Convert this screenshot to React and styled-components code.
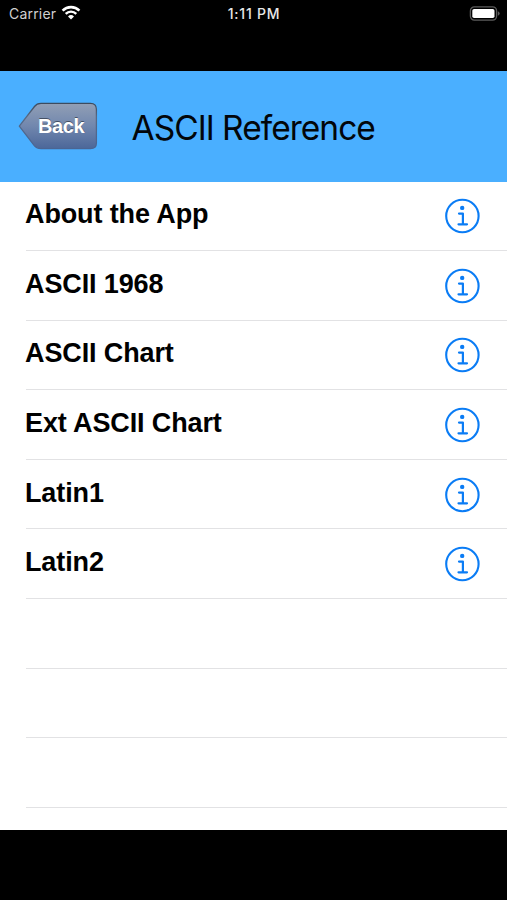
import styled, { createGlobalStyle } from "styled-components"

const opciones = ["About the App", "ASCII 1968", "ASCII Chart", "Ext ASCII Chart", "Latin1", "Latin2", "", "", ""]

const IconoWifi = () => (
  <svg width="20" height="15" viewBox="0 0 20 15" fill="none" stroke="#fff">
    <path d="M1.6 5.6 A11.9 11.9 0 0 1 18.4 5.6" strokeWidth="2.6" />
    <path d="M4.7 8.8 A7.5 7.5 0 0 1 15.3 8.8" strokeWidth="2.4" />
    <path d="M10 14.6 L7 11.5 A4.3 4.3 0 0 1 13 11.5 Z" fill="#fff" stroke="none" />
  </svg>
)

const IconoBateria = () => (
  <svg width="31" height="15" viewBox="0 0 31 15">
    <rect x="1.4" y="0.9" width="26.2" height="13.2" rx="4" fill="none" stroke="#5c5c5c" strokeWidth="1.3" />
    <rect x="3.3" y="3" width="22.2" height="9" rx="1.8" fill="#fff" />
    <path d="M28.9 5.2 Q30.7 6 30.7 7.5 Q30.7 9 28.9 9.8 Z" fill="#5c5c5c" />
  </svg>
)

const IconoInfo = () => (
  <svg width="36" height="36" viewBox="0 0 36 36" fill="none" stroke="#0a7cf5">
    <circle cx="18.4" cy="18" r="16.2" strokeWidth="2.1" />
    <circle cx="18.2" cy="9.9" r="2.2" fill="#0a7cf5" stroke="none" />
    <path d="M15 15.6 H18.9 V26.2 M14.5 26.3 H23" strokeWidth="2.2" strokeLinecap="round" strokeLinejoin="round" />
  </svg>
)

const FondoBoton = () => (
  <svg width="80" height="49" viewBox="0 0 80 49">
    <defs>
      <linearGradient id="metal" x1="0" y1="0" x2="0" y2="1">
        <stop offset="0" stopColor="#929fb5" />
        <stop offset="0.5" stopColor="#7187ae" />
        <stop offset="1" stopColor="#4c6799" />
      </linearGradient>
      <linearGradient id="borde" x1="0" y1="0" x2="0" y2="1">
        <stop offset="0" stopColor="#3d4b5e" />
        <stop offset="0.3" stopColor="#576984" />
        <stop offset="1" stopColor="#4a6593" />
      </linearGradient>
    </defs>
    <path
      d="M1.3 24.2 L16.5 4.5 Q18.8 1.4 23 1.4 H72.5 Q78.4 1.4 78.4 7.3 V41 Q78.4 46.6 72.5 46.6 H23 Q18.8 46.6 16.5 43.8 Z"
      fill="url(#metal)"
      stroke="url(#borde)"
      strokeWidth="1.3"
      strokeLinejoin="round"
    />
  </svg>
)

const App = () => {
  return (
    <>
      <EstiloGlobal />
      <Pantalla>
        <BarraEstado>
          <Operador>Carrier <IconoWifi /></Operador>
          <Hora>1:11 PM</Hora>
          <Bateria><IconoBateria /></Bateria>
        </BarraEstado>
        <Cabecera>
          <BotonAtras type="button">
            <FondoBoton />
            <TextoAtras>Back</TextoAtras>
          </BotonAtras>
          <Titulo>ASCII Reference</Titulo>
        </Cabecera>
        <Lista>
          {opciones.map((opcion, index) => (
            <Fila key={index}>
              {opcion && <Nombre>{opcion}</Nombre>}
              {opcion && <IconoInfo />}
            </Fila>
          ))}
        </Lista>
      </Pantalla>
    </>
  )
}

const EstiloGlobal = createGlobalStyle`
    * {
        box-sizing: border-box;
    }

    body {
        margin: 0;
        background: #000;
    }
`;

const Pantalla = styled.div`
    width: 507px;
    height: 900px;
    overflow: hidden;
    background: #000;
    display: flex;
    flex-direction: column;
`;

const BarraEstado = styled.div`
    height: 71px;
    padding: 0 7px 0 9px;
    flex-shrink: 0;
    display: grid;
    grid-template-columns: 1fr auto 1fr;
    align-items: start;
    color: #e8e8e8;
    font-family: Inter, sans-serif;
    font-size: 14px;
    line-height: 27px;
`;

const Operador = styled.div`
    height: 27px;
    display: flex;
    align-items: center;
    gap: 5px;
    color: #d0d0d0;
    letter-spacing: .2px;

    svg {
        margin-top: -2px;
    }
`;

const Hora = styled.div`
    margin-left: -1px;
    font-weight: 500;
    letter-spacing: .75px;
`;

const Bateria = styled.div`
    height: 27px;
    display: flex;
    align-items: center;
    justify-content: flex-end;
`;

const Cabecera = styled.header`
    height: 110.5px;
    padding-left: 18px;
    flex-shrink: 0;
    display: flex;
    align-items: center;
    background: #4aafff;
`;

const BotonAtras = styled.button`
    width: 80px;
    height: 49px;
    padding: 0;
    border: none;
    background: none;
    display: grid;
    cursor: pointer;

    > * {
        grid-area: 1 / 1;
    }
`;

const TextoAtras = styled.span`
    padding-left: 20px;
    text-align: left;
    color: #fff;
    font-family: "Liberation Sans", sans-serif;
    font-size: 20px;
    font-weight: bold;
    line-height: 48px;
    letter-spacing: -.4px;
    text-shadow: 0 -1px 0 rgba(0,0,0,.45);
`;

const Titulo = styled.h1`
    margin: 4px 0 0 33.5px;
    color: #02060a;
    font-family: Inter, sans-serif;
    font-size: 33.5px;
    font-weight: 400;
    line-height: 40px;
    letter-spacing: -.98px;
    white-space: nowrap;
`;

const Lista = styled.ul`
    height: 648px;
    margin: 0;
    padding: 0 0 0 26px;
    flex-shrink: 0;
    list-style: none;
    background: #fff;
`;

const Fila = styled.li`
    height: 69.6px;
    padding: 1px 27.5px 0 0;
    border-bottom: 1px solid #e2e2e4;
    display: flex;
    align-items: center;
    justify-content: space-between;
`;

const Nombre = styled.span`
    margin: -4px 0 0 -1px;
    color: #000;
    font-family: "Liberation Sans", sans-serif;
    font-size: 27px;
    font-weight: bold;
    line-height: 32px;
    letter-spacing: -.12px;
`;

export default App
